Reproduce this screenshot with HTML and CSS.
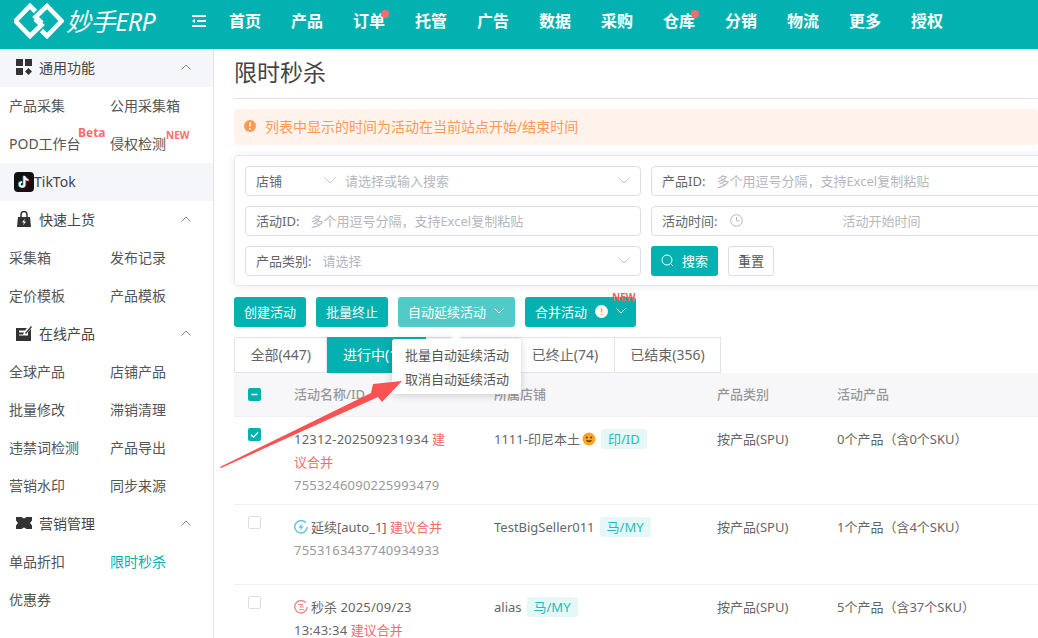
FILE: index.html
```html
<!DOCTYPE html>
<html lang="zh">
<head>
<meta charset="utf-8">
<title>限时秒杀</title>
<link rel="stylesheet" href="styles.css">
</head>
<body>
<div class="app">
  <header class="topbar">
    <div class="brand">
      <svg class="logo" viewBox="14 3 50 36" width="50" height="36"><g fill="none" stroke="#fff" stroke-width="4.600"><path d="M35.500 11.500L30 6 15.500 21 30 36 41.500 25 35 19"/><path d="M41.500 30.500L47 36 61.500 21 47 6 35.500 17 42 23"/></g></svg>
      <span class="brand-name">妙手ERP</span>
    </div>
    <svg class="menu-toggle" viewBox="0 0 16 14" width="16" height="14"><path d="M1 2h14M6 7h9M1 12h14" stroke="#fff" stroke-width="2" fill="none"/><path d="M1 7l3-2v4z" fill="#fff"/></svg>
    <nav class="nav">
      <a>首页</a><a>产品</a><a class="dot">订单</a><a>托管</a><a>广告</a><a>数据</a><a>采购</a><a class="dot">仓库</a><a>分销</a><a>物流</a><a>更多</a><a>授权</a>
    </nav>
  </header>
  <div class="body">
    <aside class="sidebar">
      <div class="side-head"><span class="side-title"><svg class="side-icon" viewBox="0 0 16 16" width="16" height="16"><rect x="0" y="0" width="7" height="7" fill="#333"/><rect x="9" y="0" width="7" height="7" fill="#333"/><rect x="0" y="9" width="7" height="7" fill="#333"/><path d="M12.500 9l3.500 3.500-3.500 3.500-3.500-3.500z" fill="#333"/></svg>通用功能</span><svg class="caret" viewBox="0 0 10 6" width="10" height="6"><path d="M.5 5.500L5 1l4.500 4.500" fill="none" stroke="#888"/></svg></div>
      <div class="side-grid">
        <a>产品采集</a><a>公用采集箱</a>
        <a class="tagged">POD工作台<b class="tag tag-beta">Beta</b></a><a class="tagged">侵权检测<b class="tag tag-new">NEW</b></a>
      </div>
      <div class="side-head tiktok"><svg viewBox="0 0 20 20" width="20" height="20"><rect width="20" height="20" rx="4" fill="#111"/><path d="M9.800 3.700v8.500a2.300 2.300 0 1 1-2.300-2.300" fill="none" stroke="#25f4ee" stroke-width="2"/><path d="M11.300 4.800v8a2.300 2.300 0 0 1-3.500 1.900M11.300 5c.4 2 1.800 3.200 3.800 3.400" fill="none" stroke="#fe2c55" stroke-width="2"/><path d="M10.500 4v8.500a2.300 2.300 0 1 1-2.300-2.300M10.500 4.500c.4 2 1.800 3.200 3.800 3.400" fill="none" stroke="#fff" stroke-width="1.700"/></svg><span>TikTok</span></div>
      <div class="side-head plain"><span class="side-title"><svg class="side-icon" viewBox="0 0 16 16" width="16" height="16"><path d="M5 6V3.500a3 3 0 0 1 6 0V6" fill="none" stroke="#333" stroke-width="1.500"/><path d="M2 6h12l1 10H1z" fill="#333"/><path d="M9 7.500L6 11.500h2l-1 3 3-4H8z" fill="#fff"/></svg>快速上货</span><svg class="caret" viewBox="0 0 10 6" width="10" height="6"><path d="M.5 5.500L5 1l4.500 4.500" fill="none" stroke="#888"/></svg></div>
      <div class="side-grid">
        <a>采集箱</a><a>发布记录</a>
        <a>定价模板</a><a>产品模板</a>
      </div>
      <div class="side-head plain"><span class="side-title"><svg class="side-icon" viewBox="0 0 16 16" width="16" height="16"><path d="M0 3h11L9 5.500H3v2h5l-1 2H3v1h9V7l3-3v12H0z" fill="#333"/><path d="M9 8l6-7 1 1-6 7z" fill="#333"/></svg>在线产品</span><svg class="caret" viewBox="0 0 10 6" width="10" height="6"><path d="M.5 5.500L5 1l4.500 4.500" fill="none" stroke="#888"/></svg></div>
      <div class="side-grid">
        <a>全球产品</a><a>店铺产品</a>
        <a>批量修改</a><a>滞销清理</a>
        <a>违禁词检测</a><a>产品导出</a>
        <a>营销水印</a><a>同步来源</a>
      </div>
      <div class="side-head plain"><span class="side-title"><svg class="side-icon" viewBox="0 0 16 12" width="16" height="12"><path d="M0 0h5.500L8 1.500 10.500 0H16v3.500L14 6l2 2.500V12h-5.500L8 10.500 5.500 12H0V8.500L2 6 0 3.500z" fill="#333"/></svg>营销管理</span><svg class="caret" viewBox="0 0 10 6" width="10" height="6"><path d="M.5 5.500L5 1l4.500 4.500" fill="none" stroke="#888"/></svg></div>
      <div class="side-grid">
        <a>单品折扣</a><a class="active">限时秒杀</a>
        <a>优惠券</a>
      </div>
    </aside>
    <main class="main">
      <h1 class="page-title">限时秒杀</h1>
      <div class="alert"><svg viewBox="0 0 12 12" width="12" height="12"><circle cx="6" cy="6" r="6" fill="#ff9a56"/><path d="M6 2.500v4M6 8v1.500" stroke="#fff" stroke-width="1.500"/></svg><span>列表中显示的时间为活动在当前站点开始/结束时间</span></div>
      <section class="filter">
        <div class="field"><span class="f-select">店铺<svg class="chev" viewBox="0 0 12 7" width="12" height="7"><path d="M.5.500L6 6 11.500.500" fill="none" stroke="#c4c6cf"/></svg></span><span class="ph grow">请选择或输入搜索</span><svg class="chev" viewBox="0 0 12 7" width="12" height="7"><path d="M.5.500L6 6 11.500.500" fill="none" stroke="#c4c6cf"/></svg></div>
        <div class="field"><span class="lbl">产品ID:</span><span class="ph grow">多个用逗号分隔，支持Excel复制粘贴</span></div>
        <div class="field"><span class="lbl">活动ID:</span><span class="ph grow">多个用逗号分隔，支持Excel复制粘贴</span></div>
        <div class="field"><span class="lbl lbl-time">活动时间:</span><svg class="clock" viewBox="0 0 13 13" width="13" height="13"><circle cx="6.500" cy="6.500" r="5.800" fill="none" stroke="#b5b7c0"/><path d="M6.500 3v3.800h3" fill="none" stroke="#b5b7c0"/></svg><span class="ph time-ph">活动开始时间</span></div>
        <div class="field"><span class="lbl">产品类别:</span><span class="ph grow">请选择</span><svg class="chev" viewBox="0 0 12 7" width="12" height="7"><path d="M.5.500L6 6 11.500.500" fill="none" stroke="#c4c6cf"/></svg></div>
        <div class="filter-actions">
          <button class="btn btn-search"><svg viewBox="0 0 13 13" width="13" height="13"><circle cx="6" cy="6" r="5" fill="none" stroke="#fff"/><path d="M9.500 9.500l2.500 2.500" stroke="#fff"/></svg>搜索</button>
          <button class="btn btn-plain">重置</button>
        </div>
      </section>
      <div class="actions">
        <button class="btn">创建活动</button>
        <button class="btn">批量终止</button>
        <button class="btn btn-light">自动延续活动<svg class="chev" viewBox="0 0 10 6" width="10" height="6"><path d="M.5.500L5 5 9.500.500" fill="none" stroke="#fff"/></svg></button>
        <button class="btn btn-merge">合并活动<svg class="info" viewBox="0 0 13 13" width="13" height="13"><circle cx="6.500" cy="6.500" r="6.500" fill="#fff"/><path d="M6.500 3v4.500M6.500 8.800v1.500" stroke="#f0b040" stroke-width="1.500"/></svg><svg class="chev" viewBox="0 0 10 6" width="10" height="6"><path d="M.5.500L5 5 9.500.500" fill="none" stroke="#fff"/></svg><b class="tag merge-new">NEW</b></button>
      </div>
      <div class="tabs">
        <a class="tab">全部(447)</a><a class="tab tab-on">进行中(17)</a><a class="tab">未开始(0)</a><a class="tab">已终止(74)</a><a class="tab">已结束(356)</a>
      </div>
      <div class="table">
        <div class="row thead">
          <span class="cb cb-on cb-mid"><svg viewBox="0 0 13 13" width="13" height="13"><path d="M3.500 6.500h6" stroke="#fff" stroke-width="1.500"/></svg></span>
          <span>活动名称/ID</span><span>所属店铺</span><span>产品类别</span><span>活动产品</span>
        </div>
        <div class="row r1">
          <span class="cb cb-on"><svg viewBox="0 0 13 13" width="13" height="13"><path d="M3 6.800l2.500 2.400L10 4.200" fill="none" stroke="#fff" stroke-width="1.300"/></svg></span>
          <div class="name"><span class="num">12312-202509231934</span> <em>建议合并</em><small class="num">7553246090225993479</small></div>
          <div class="store">1111-印尼本土<svg class="emoji" viewBox="0 0 14 14" width="14" height="14"><circle cx="7" cy="7" r="6.500" fill="#f5a623"/><circle cx="4.800" cy="5.500" r="1" fill="#5a3a10"/><circle cx="9.200" cy="5.500" r="1" fill="#5a3a10"/><path d="M3.800 8.300c1.500 2.600 4.900 2.600 6.400 0z" fill="#7a3a10"/></svg><i class="chip">印/ID</i></div>
          <span>按产品(SPU)</span><span>0个产品（含0个SKU）</span>
        </div>
        <div class="row r2">
          <span class="cb"></span>
          <div class="name"><svg class="mark" viewBox="0 0 14 14" width="14" height="14"><path d="M11.800 2.800A6.200 6.200 0 1 0 13.200 7" fill="none" stroke="#5cc5e0" stroke-width="1.400"/><path d="M8 3L4.500 7.800h2.300L6 11l3.500-4.800H7.200z" fill="#5cc5e0"/></svg>延续[auto_1] <em>建议合并</em><small class="num">7553163437740934933</small></div>
          <div class="store">TestBigSeller011<i class="chip">马/MY</i></div>
          <span>按产品(SPU)</span><span>1个产品（含4个SKU）</span>
        </div>
        <div class="row r3">
          <span class="cb"></span>
          <div class="name"><svg class="mark" viewBox="0 0 14 14" width="14" height="14"><path d="M11.800 2.800A6.200 6.200 0 1 0 13.200 7" fill="none" stroke="#f58a8a" stroke-width="1.400"/><path d="M4 4.500h5L6 7h4M5 9.500h5" fill="none" stroke="#f58a8a"/></svg>秒杀 <span class="num">2025/09/23 13:43:34</span> <em>建议合并</em></div>
          <div class="store">alias<i class="chip">马/MY</i></div>
          <span>按产品(SPU)</span><span>5个产品（含37个SKU）</span>
        </div>
      </div>
      <div class="menu">
        <a>批量自动延续活动</a>
        <a>取消自动延续活动</a>
      </div>
      <svg class="arrow" viewBox="0 0 200 110" width="200" height="110"><path d="M0 98L151 24 153 15 182 12 162 33 158 28 1 99z" fill="#fa5252"/></svg>
    </main>
  </div>
</div>
</body>
</html>
```

FILE: styles.css
```css
* { box-sizing: border-box; }
html, body { margin: 0; height: 100%; overflow: hidden; background: #fff; }
body { font-family: "Noto Sans", "Noto Sans CJK SC", sans-serif; font-size: 13px; color: #555; }
a { display: block; }
svg { flex: none; display: block; }
.app { width: 1038px; height: 638px; display: flex; flex-direction: column; overflow: hidden; }

.topbar { height: 49px; flex: none; background: #03b2b0; display: flex; align-items: center; color: #fff; padding-bottom: 7px; }
.brand { width: 191px; padding-left: 14px; display: flex; align-items: center; gap: 2px; flex: none; }
.brand-name { font-size: 25px; font-style: italic; font-weight: 400; line-height: 30px; white-space: nowrap; letter-spacing: -.4px; }
.menu-toggle { margin-right: 22px; }
.nav { display: flex; gap: 30px; font-size: 16px; font-weight: 700; }
.nav a { width: 32px; white-space: nowrap; position: relative; line-height: 24px; }
.dot::after { content: ""; position: absolute; right: -4px; top: 1px; width: 8px; height: 8px; border-radius: 50%; background: #f56c6c; }

.body { flex: 1; display: flex; min-height: 0; }
.sidebar { width: 214px; flex: none; border-right: 1px solid #e3e3ec; font-size: 14px; }
.side-head { height: 38px; background: #f5f6fa; display: flex; align-items: center; justify-content: space-between; padding: 0 22px 2px 16px; color: #444; }
.side-head.plain { background: #fff; }
.side-title { display: flex; align-items: center; gap: 7px; }
.side-icon { width: 16px; }
.side-head.tiktok { justify-content: flex-start; padding: 0 0 1px 14px; }
.side-grid { display: grid; grid-template-columns: 101px 101px; padding-left: 9px; }
.side-grid a { height: 38px; line-height: 37px; color: #555; position: relative; white-space: nowrap; }
.side-grid a.active { color: #03b2b0; }
.tag { position: absolute; font-weight: 700; line-height: 12px; color: #ff6b6b; }
.tag-beta { left: 69px; top: 2px; font-size: 12px; }
.tag-new { left: 56px; top: 4px; font-size: 10px; }

.main { flex: 1; min-width: 0; padding-left: 20px; position: relative; }
.page-title { margin: 0; height: 50px; border-bottom: 1px solid #e3e3ec; font-size: 23px; font-weight: 400; line-height: 46px; color: #444; }
.alert { margin-top: 10px; height: 36px; background: #fff3eb; border-radius: 4px; display: flex; align-items: center; gap: 9px; padding: 0 0 2px 10px; color: #ff9a56; font-size: 14px; }
.filter { margin-top: 10px; width: 830px; height: 131px; border: 1px solid #e6e6ee; border-radius: 4px; box-shadow: 0 0 8px rgba(0,0,0,.08); padding: 10px; display: grid; grid-template-columns: 396px 396px; grid-auto-rows: 30px; gap: 10px; }
.field { border: 1px solid #dcdde6; border-radius: 4px; display: flex; align-items: center; padding: 0 10px 2px; gap: 11px; }
.grow { flex: 1; white-space: nowrap; }
.ph { color: #b5b7c0; }
.lbl { color: #666; white-space: nowrap; }
.f-select { width: 80px; display: flex; align-items: center; justify-content: space-between; color: #666; margin-right: -2px; flex: none; }
.clock { margin-left: 2px; }
.time-ph { margin-left: 88px; }
.filter-actions { display: flex; gap: 10px; }
.btn { height: 30px; border: 0; border-radius: 3px; background: #03b2b0; color: #fff; font: inherit; padding: 0 10px 2px; display: flex; align-items: center; gap: 8px; white-space: nowrap; position: relative; }
.btn-plain { background: #fff; color: #555; border: 1px solid #dcdde6; padding: 0 9px 2px; }
.btn-light { background: #52cac8; padding-right: 11px; }
.actions { margin-top: 11px; display: flex; gap: 10px; }
.merge-new { left: 87px; top: -6px; font-size: 10px; color: #ff5a5a; }
.tabs { margin-top: 10px; height: 36px; display: flex; font-size: 14px; }
.tab { height: 36px; line-height: 34px; padding: 0 15.500px; border: 1px solid #e3e3ec; border-left: 0; color: #666; white-space: nowrap; }
.tab:first-child { border-left: 1px solid #e3e3ec; border-radius: 3px 0 0 0; }
.tab-on { background: #03b2b0; color: #fff; border-color: #03b2b0; }
.table { width: 810px; }
.row { display: grid; grid-template-columns: 46px 200px 223px 120px 1fr; padding-left: 14px; border-bottom: 1px solid #eeeef4; }
.thead { height: 44px; background: #f7f7f9; align-items: center; font-weight: 500; color: #999; }
.r1 { height: 88px; padding-top: 11px; }
.r2, .r3 { height: 80px; padding-top: 11px; }
.row > span, .name, .store { line-height: 23px; }
.r1 > span:not(.cb), .r2 > span:not(.cb), .r3 > span:not(.cb) { color: #666; }
.cb { width: 13px; height: 13px; border: 1px solid #dcdde6; border-radius: 2px; background: #fff; display: block; }
.cb-on { background: #03b2b0; border: 0; }
.name { color: #666; padding-right: 44px; }
.name em { font-style: normal; color: #f56c6c; }
.name small { display: block; font-size: 13px; color: #999; }
.num { letter-spacing: .22px; }
.mark { display: inline-block; vertical-align: -2px; margin-right: 3px; }
.emoji { display: inline-block; vertical-align: -2px; margin-left: 2px; }
.store { color: #666; white-space: nowrap; }
.chip { font-style: normal; display: inline-block; height: 20px; line-height: 20px; padding: 0 7px; margin-left: 5px; border-radius: 3px; background: #e6f7f7; color: #1bbdbb; font-size: 13px; }

.menu { position: absolute; left: 178px; top: 290px; width: 129px; height: 55px; background: #fff; border-radius: 3px; box-shadow: 0 1px 8px rgba(0,0,0,.18); padding: 4px 0 0 13px; color: #555; }
.menu a { height: 24px; line-height: 24px; white-space: nowrap; }
.menu::before { content: ""; position: absolute; left: 60px; top: -4px; width: 8px; height: 8px; background: #fff; transform: rotate(45deg); }
.arrow { position: absolute; left: 6px; top: 320px; }
```
